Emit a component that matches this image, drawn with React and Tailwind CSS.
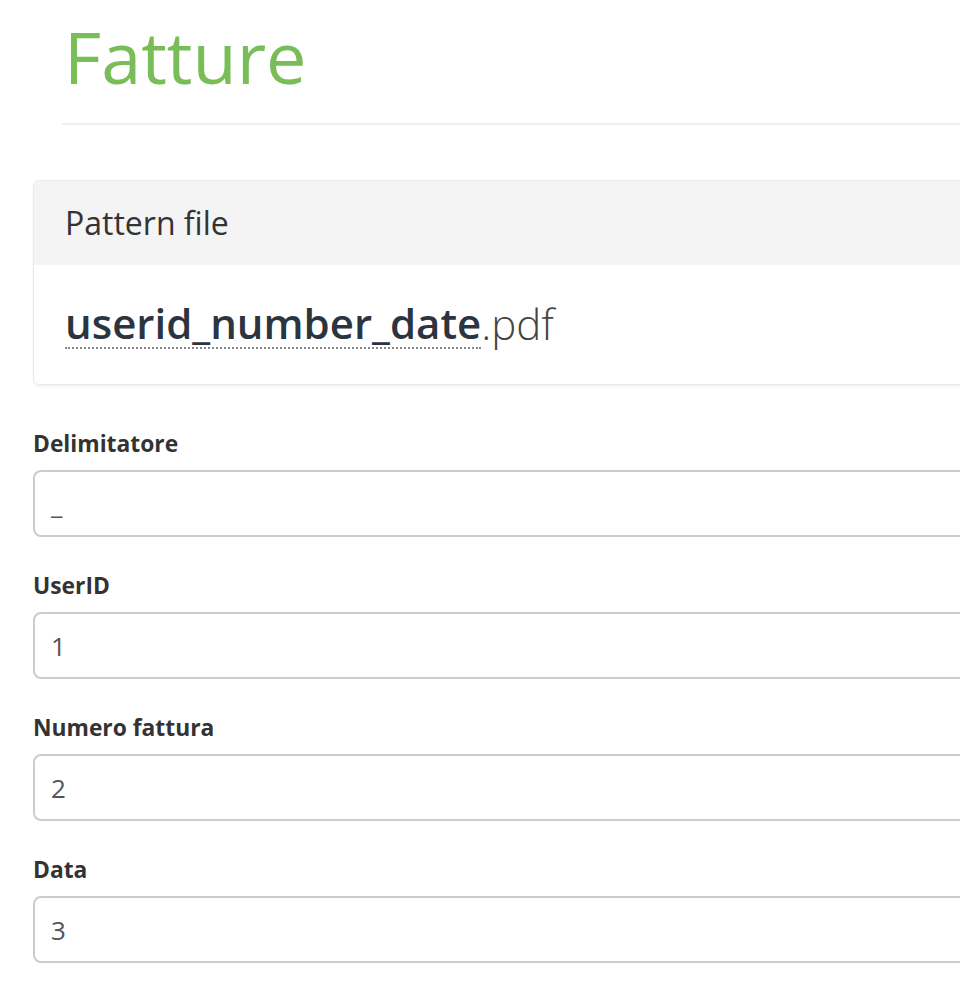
const FIELDS = [
  { label: 'Delimitatore', value: '_' },
  { label: 'UserID', value: '1' },
  { label: 'Numero fattura', value: '2' },
  { label: 'Data', value: '3' }
]

export default function App() {
  return (
    <div className="w-[960px] h-[992px] overflow-hidden bg-white font-['Open_Sans',sans-serif]">
      <div className="w-[1200px]">
        <div className="pl-[62px]">
          <h1 className="pl-[2px] pt-[14px] text-[72px] leading-[84px] font-normal text-[#78bd57]">Fatture</h1>
          <div className="mt-[25px] border-t-2 border-[#eeeeee]" />
        </div>

        <div className="ml-[33px] mt-[55px] rounded-md border border-[#e8e8ee] shadow-[0_2px_3px_rgba(0,0,0,0.05)]">
          <div className="h-[84px] flex items-center px-[31px] bg-[#f4f4f4] rounded-t-md text-[32px] text-[#333]">
            Pattern file
          </div>
          <div className="h-[119px] flex items-center px-[31px] pb-[2px] text-[42px] text-[#2c3440]">
            <span className="font-semibold border-b-2 border-dotted border-[#888] leading-[48px]">userid_number_date</span>
            <span className="font-light text-[#444] leading-[48px]">.pdf</span>
          </div>
        </div>

        <div className="ml-[33px] mt-[43px] flex flex-col gap-[33px]">
          {FIELDS.map((f) => (
            <div key={f.label}>
              <label className="block text-[22.8px] leading-[32px] font-bold text-[#333] mb-[10px]">{f.label}</label>
              <div className="h-[67px] flex items-center px-[16px] pt-[2px] rounded-lg border-2 border-[#cccccc] text-[26px] text-[#555]">
                {f.value}
              </div>
            </div>
          ))}
        </div>
      </div>
    </div>
  )
}
